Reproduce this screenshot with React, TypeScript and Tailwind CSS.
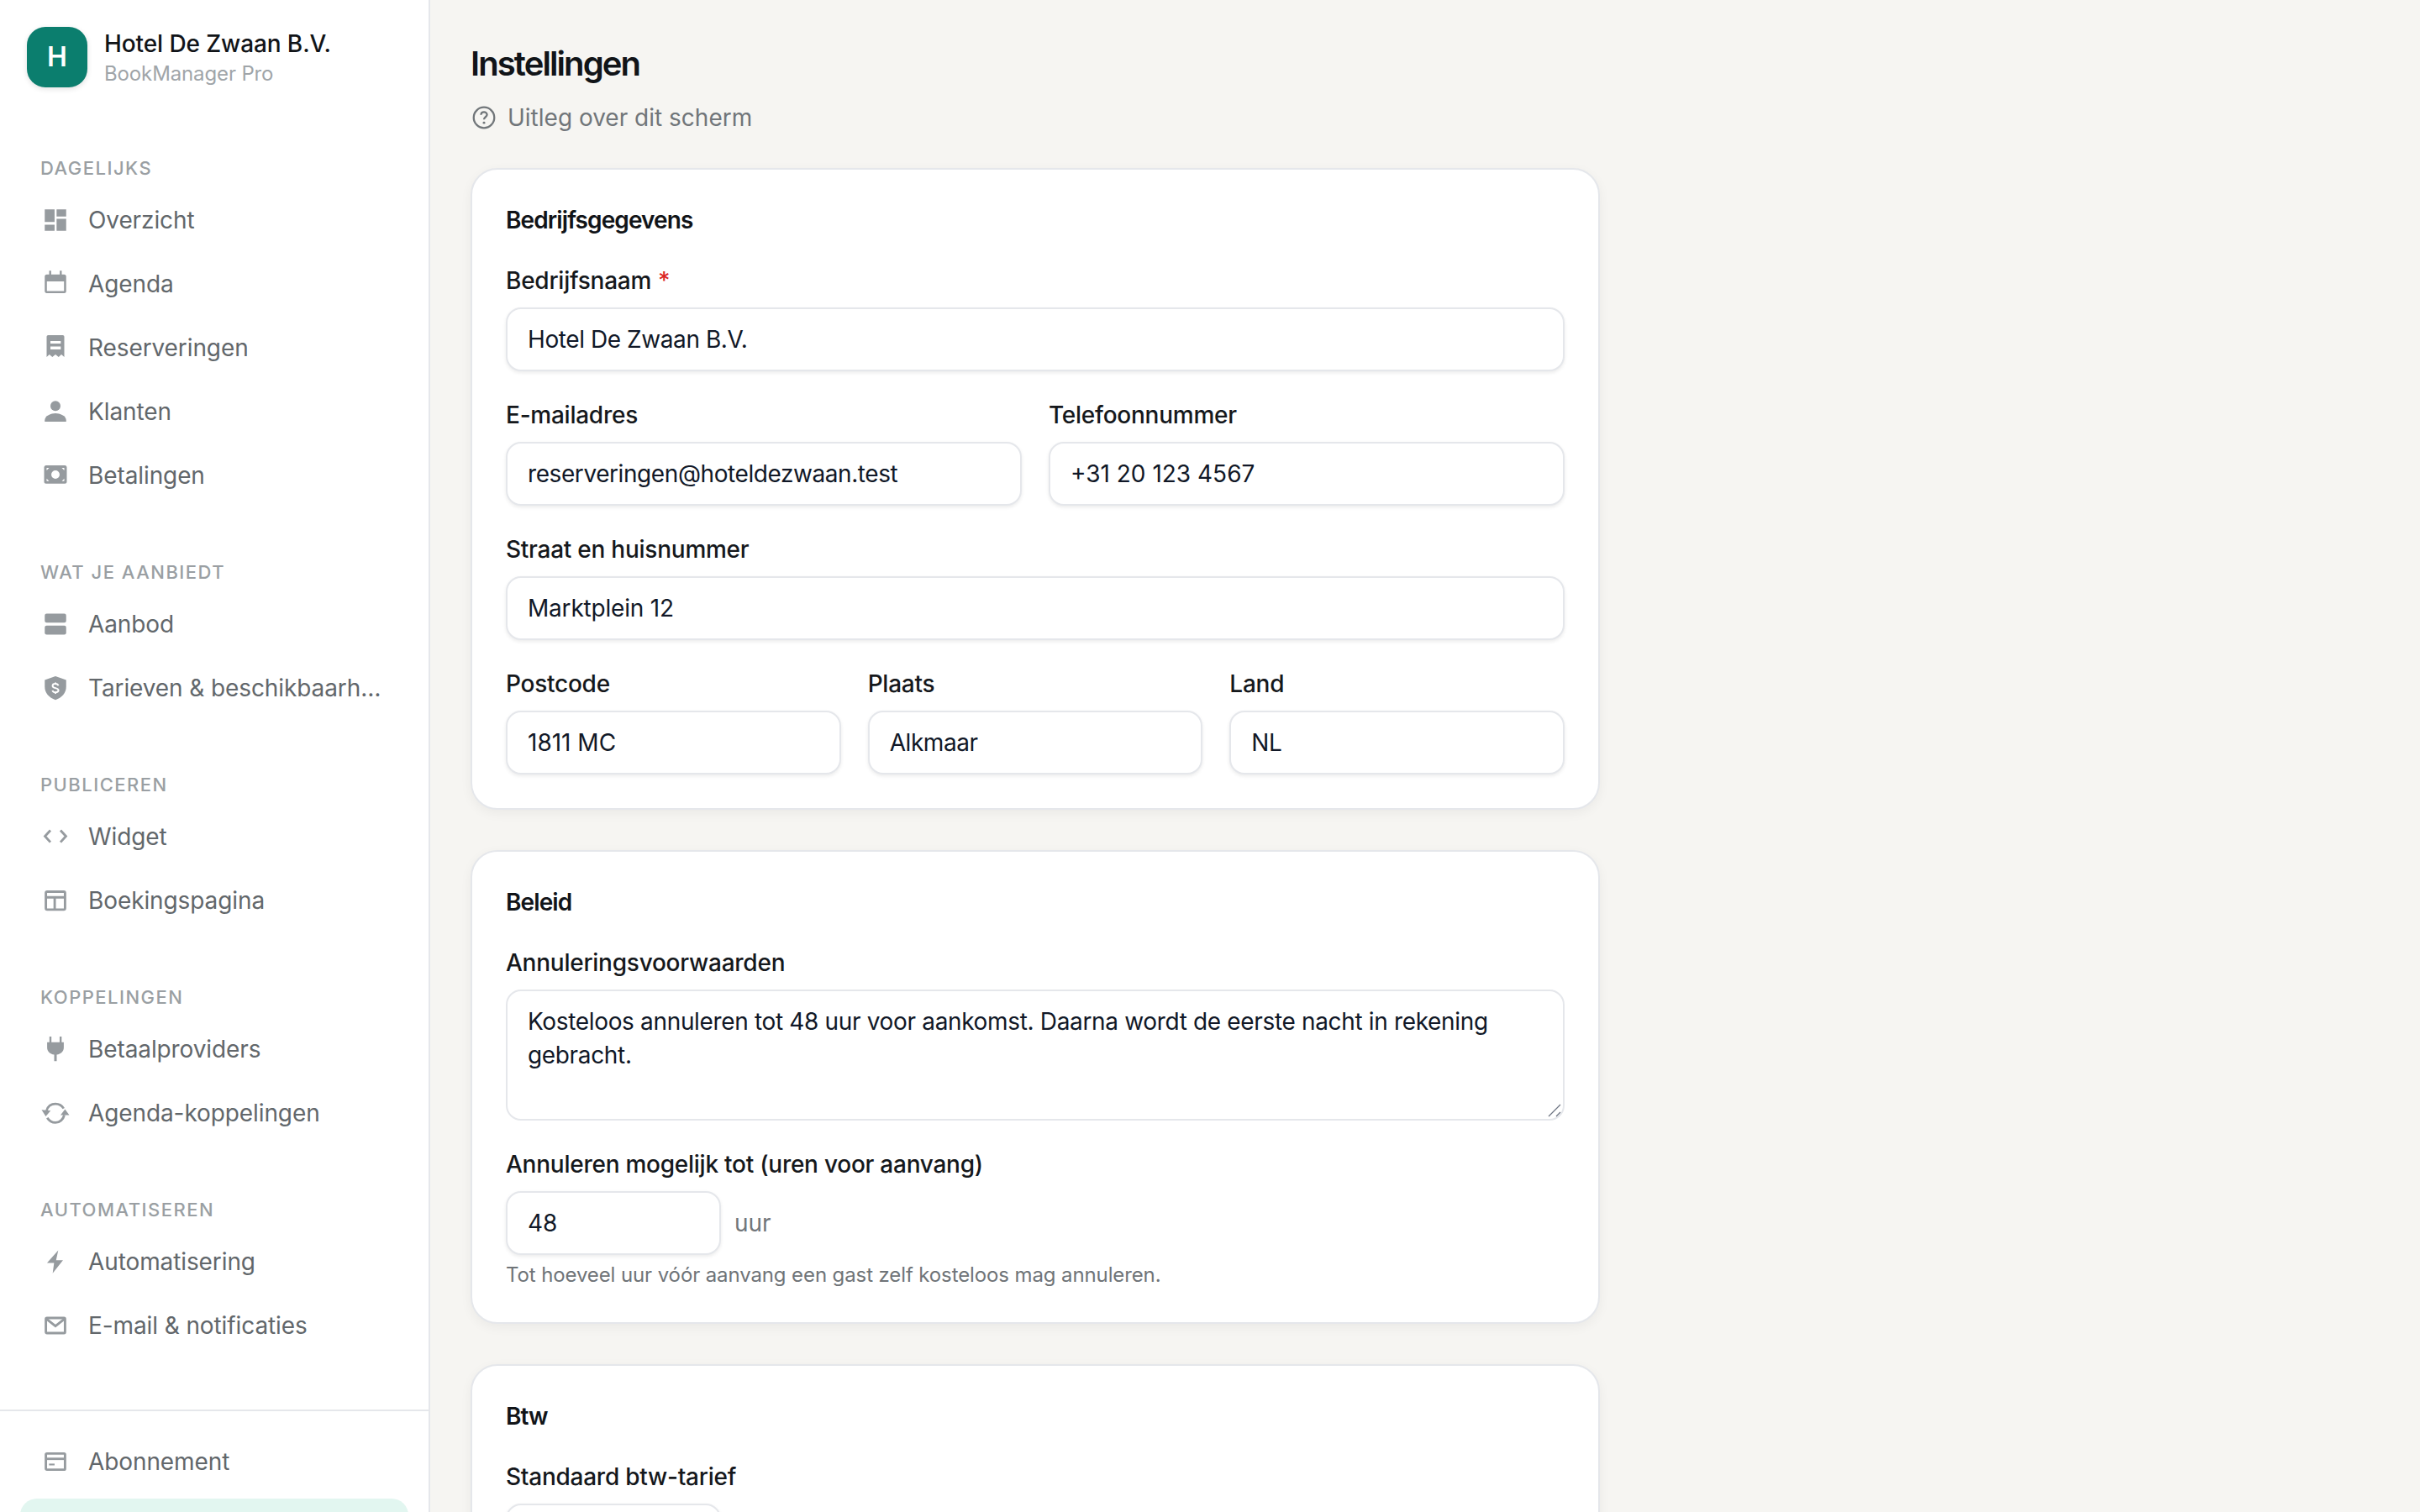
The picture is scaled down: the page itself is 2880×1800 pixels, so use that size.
import React from "react";

const Svg = ({ children }: { children: React.ReactNode }) => (
  <svg viewBox="0 0 24 24" className="w-9 h-9 shrink-0 text-[#969b9f]" fill="currentColor">
    {children}
  </svg>
);

const line = { fill: "none", stroke: "currentColor", strokeWidth: 1.9 } as const;

const icons: Record<string, React.ReactNode> = {
  dashboard: <path d="M3.5 3.5h7.8v10H3.5zM3.5 15.7h7.8v4.8H3.5zM12.9 3.5h7.6v5.6h-7.6zM12.9 11h7.6v9.5h-7.6z" />,
  calendar: (
    <path
      fillRule="evenodd"
      d="M7 1.5h1.6v3h6.8v-3H17v3h2c.9 0 1.5.7 1.5 1.5v11.800c0 .9-.7 1.500-1.500 1.500H5c-.9 0-1.500-.7-1.500-1.500V6c0-.8.6-1.500 1.500-1.500h2zM5.200 10v7.600h13.600V10z"
    />
  ),
  receipt: (
    <path
      fillRule="evenodd"
      d="M6.300 2h11.400c.8 0 1.300.6 1.300 1.300v16l-2.300-2-2.200 2-2.500-2-2.500 2-2.300-2-2.200 2v-16C5 2.600 5.500 2 6.300 2zM8 6.600v2.100h8.200V6.600zM8 11v2.300h8.200V11z"
    />
  ),
  person: (
    <>
      <circle cx="12" cy="7.500" r="4" />
      <path d="M3.500 20v-1c0-3.600 5-5.600 8.500-5.600s8.500 2 8.500 5.600v1z" />
    </>
  ),
  money: (
    <>
      <path
        fillRule="evenodd"
        d="M4.500 4h15c.9 0 1.500.7 1.500 1.500V17c0 .9-.7 1.500-1.500 1.500h-15C3.700 18.500 3 17.900 3 17V5.500C3 4.700 3.700 4 4.500 4zM12 8a3.300 3.300 0 1 0 0 6.600A3.300 3.300 0 0 0 12 8z"
      />
      <path fill="#fff" d="M5 6h2L5 8zM19 6h-2l2 2zM5 16.500h2l-2-2zM19 16.500h-2l2-2z" />
    </>
  ),
  offer: (
    <>
      <rect x="3.500" y="3.700" width="17" height="7.200" rx="1.500" />
      <rect x="3.500" y="13.100" width="17" height="7.300" rx="1.500" />
    </>
  ),
  shield: (
    <>
      <path d="M12 2.600l8.500 3v5.400c0 5-3.400 8.700-8.500 10.500-5.100-1.800-8.500-5.500-8.500-10.500V5.600z" />
      <path
        d="M14.300 10.200c-.3-1-1.200-1.500-2.300-1.500-1.300 0-2.300.6-2.300 1.600 0 2.400 4.700 1.200 4.700 3.600 0 1-1 1.600-2.400 1.600-1.200 0-2.100-.6-2.400-1.500M12 7.700v1M12 15.500v1.200"
        fill="none"
        stroke="#fff"
        strokeWidth="1.300"
      />
    </>
  ),
  code: <path {...line} d="M8 7l-4.300 4.700L8 16.400M16 7l4.300 4.700L16 16.400" />,
  layout: (
    <>
      <rect {...line} x="4.400" y="5" width="15.200" height="14.200" rx="1" />
      <path {...line} d="M4.400 9.500h15.200M11.400 9.500v9.700" />
    </>
  ),
  plug: (
    <path d="M7.200 2h1.600v4.500h6.500V2h1.600v4.500h1.700v4.200c0 3-2.200 5.300-5.600 5.700v5.100h-2v-5.100c-3.400-.4-5.600-2.700-5.600-5.700V6.500h1.800z" />
  ),
  sync: (
    <>
      <path {...line} d="M5 10.200C5.800 6.700 8.600 4.700 12 4.700c2.800 0 5.100 1.300 6.500 3.700" />
      <path {...line} d="M19 13.600c-.8 3.500-3.600 6-7 6-2.800 0-5.100-1.500-6.500-3.800" />
      <path d="M1 9.500l7.200.7-3.900 4.500zM23 13.700h-7l3.600-4.700z" />
    </>
  ),
  bolt: <path d="M14.200 3L5.300 13h5.600l-1.100 8.200 8.200-10.400h-5.500z" />,
  mail: (
    <>
      <rect {...line} x="4.400" y="6" width="15.200" height="12" rx=".8" />
      <path {...line} d="M4.600 6.600L12 12.400l7.400-5.800" />
    </>
  ),
  card: (
    <>
      <rect {...line} x="4.400" y="5.600" width="15.200" height="12.800" rx=".8" />
      <path {...line} d="M4.400 9.800h15.200" />
      <path {...line} strokeWidth="1.400" d="M6.900 14.300h4.400" />
    </>
  ),
  gear: (
    <>
      <circle {...line} cx="12" cy="12" r="3" />
      <circle {...line} cx="12" cy="12" r="8" />
    </>
  ),
};

const Item = ({ icon, label, active }: { icon: string; label: string; active?: boolean }) => (
  <div
    className={`flex items-center gap-5 h-[72px] shrink-0 px-6 rounded-[20px] text-[28px] ${
      active ? "bg-[#e2f6f0] text-[#0f7c6c] font-medium" : "text-[#62676b]"
    }`}
  >
    <Svg>{icons[icon]}</Svg>
    <span className="truncate leading-[44px] tracking-[-0.1px] pl-px">{label}</span>
  </div>
);

const Section = ({ title, items }: { title: string; items: [string, string][] }) => (
  <div className="mb-[63px]">
    <div className="h-8 leading-8 mb-[10px] px-6 text-[22px] font-medium uppercase tracking-[1.48px] text-[#9a9fa3]">
      {title}
    </div>
    <div className="flex flex-col gap-1">
      {items.map(([icon, label]) => (
        <Item key={label} icon={icon} label={label} />
      ))}
    </div>
  </div>
);

const Sidebar = () => (
  <aside className="w-[512px] h-full shrink-0 bg-white border-r-2 border-[#e5e7eb] flex flex-col overflow-hidden">
    <div className="flex items-center gap-5 pt-8 px-8 shrink-0">
      <div className="w-[72px] h-[72px] rounded-[22px] bg-[#0b7e6e] text-white flex items-center justify-center text-[32px] font-semibold shadow-[0_2px_6px_rgba(0,0,0,0.12)]">
        H
      </div>
      <div className="flex flex-col">
        <div className="text-[28px] leading-10 font-medium text-[#111418] tracking-[-0.1px]">Hotel De Zwaan B.V.</div>
        <div className="text-[24px] leading-8 text-[#a0a5a9] tracking-[-0.13px]">BookManager Pro</div>
      </div>
    </div>
    <nav className="flex-1 min-h-0 pt-[80px] px-6 overflow-hidden">
      <Section
        title="Dagelijks"
        items={[
          ["dashboard", "Overzicht"],
          ["calendar", "Agenda"],
          ["receipt", "Reserveringen"],
          ["person", "Klanten"],
          ["money", "Betalingen"],
        ]}
      />
      <Section
        title="Wat je aanbiedt"
        items={[
          ["offer", "Aanbod"],
          ["shield", "Tarieven & beschikbaarheid"],
        ]}
      />
      <Section
        title="Publiceren"
        items={[
          ["code", "Widget"],
          ["layout", "Boekingspagina"],
        ]}
      />
      <Section
        title="Koppelingen"
        items={[
          ["plug", "Betaalproviders"],
          ["sync", "Agenda-koppelingen"],
        ]}
      />
      <Section
        title="Automatiseren"
        items={[
          ["bolt", "Automatisering"],
          ["mail", "E-mail & notificaties"],
        ]}
      />
    </nav>
    <div className="h-[122px] shrink-0 overflow-hidden border-t-2 border-[#e5e7eb] pt-6 px-6 flex flex-col gap-2">
      <Item icon="card" label="Abonnement" />
      <Item icon="gear" label="Instellingen" active />
    </div>
  </aside>
);

const inputCls =
  "block w-full h-[76px] bg-white border-2 border-[#e5e7eb] rounded-[18px] px-6 text-[28px] text-[#111827] outline-none shadow-[0_2px_4px_rgba(0,0,0,0.08)]";

const Label = ({ children, required }: { children: React.ReactNode; required?: boolean }) => (
  <label className="block h-10 leading-10 mb-3 text-[28px] font-medium text-[#15181c] tracking-[-0.25px]">
    {children}
    {required && <span className="ml-2 text-[#dc2626]">*</span>}
  </label>
);

const Field = ({
  label,
  value,
  required,
  track = "tracking-[-0.42px]",
}: {
  label: string;
  value: string;
  required?: boolean;
  track?: string;
}) => (
  <div className="min-w-0">
    <Label required={required}>{label}</Label>
    <input className={`${inputCls} ${track}`} defaultValue={value} />
  </div>
);

const Card = ({ title, children }: { title: string; children: React.ReactNode }) => (
  <section className="w-[1344px] bg-white border-2 border-[#e5e7eb] rounded-[32px] p-10 shadow-[0_4px_14px_rgba(0,0,0,0.05)]">
    <h2 className="h-10 leading-10 mb-8 text-[28px] font-semibold text-[#111418] tracking-[-0.9px]">{title}</h2>
    <div className="flex flex-col gap-8">{children}</div>
  </section>
);

export default function App() {
  return (
    <div className="flex w-[2880px] h-[1800px] overflow-hidden bg-[#f6f5f2] font-['Inter',sans-serif]">
      <Sidebar />
      <main className="flex-1 min-w-0 pt-12 pl-12 overflow-hidden">
        <h1 className="h-14 leading-14 text-[40px] font-semibold text-[#111418] tracking-[-1.9px]">Instellingen</h1>
        <div className="flex items-center gap-3 h-10 mt-4 mb-10 text-[28px] text-[#71767a]">
          <svg viewBox="0 0 24 24" className="w-8 h-8 shrink-0" fill="none" stroke="currentColor">
            <circle cx="12" cy="12" r="9.200" strokeWidth="1.700" />
            <path d="M9.300 9.600c.1-1.600 1.300-2.500 2.700-2.500 1.500 0 2.700 1 2.700 2.300 0 2-2.700 2.100-2.700 4.300" strokeWidth="1.700" />
            <circle cx="12" cy="16.600" r="1.100" fill="currentColor" stroke="none" />
          </svg>
          Uitleg over dit scherm
        </div>
        <div className="flex flex-col gap-12">
          <Card title="Bedrijfsgegevens">
            <Field label="Bedrijfsnaam" value="Hotel De Zwaan B.V." required />
            <div className="grid grid-cols-2 gap-8">
              <Field label="E-mailadres" value="reserveringen@hoteldezwaan.test" />
              <Field label="Telefoonnummer" value="+31 20 123 4567" track="tracking-normal" />
            </div>
            <Field label="Straat en huisnummer" value="Marktplein 12" track="tracking-[-0.2px]" />
            <div className="grid grid-cols-3 gap-8">
              <Field label="Postcode" value="1811 MC" track="tracking-normal" />
              <Field label="Plaats" value="Alkmaar" />
              <Field label="Land" value="NL" />
            </div>
          </Card>
          <Card title="Beleid">
            <div>
              <Label>Annuleringsvoorwaarden</Label>
              <div className="relative">
                <textarea
                  readOnly
                  rows={3}
                  className="block w-full h-[156px] resize-none bg-white border-2 border-[#e5e7eb] rounded-[18px] px-6 py-4 text-[28px] leading-10 text-[#111827] tracking-[-0.34px] outline-none"
                  defaultValue="Kosteloos annuleren tot 48 uur voor aankomst. Daarna wordt de eerste nacht in rekening gebracht."
                />
                <svg viewBox="0 0 16 16" className="absolute right-1 bottom-1 w-4 h-4" fill="none" stroke="#6b7280" strokeWidth="1.200">
                  <path d="M1 15L15 1M10 15l5-5" />
                </svg>
              </div>
            </div>
            <div>
              <Label>Annuleren mogelijk tot (uren voor aanvang)</Label>
              <div className="flex items-center gap-4">
                <input className={`${inputCls} !w-64`} defaultValue="48" />
                <span className="text-[28px] text-[#71767a]">uur</span>
              </div>
              <p className="mt-2 leading-8 text-[24px] text-[#6f7478] tracking-[-0.11px]">
                Tot hoeveel uur vóór aanvang een gast zelf kosteloos mag annuleren.
              </p>
            </div>
          </Card>
          <Card title="Btw">
            <div>
              <Label>Standaard btw-tarief</Label>
              <input className={`${inputCls} !w-64`} defaultValue="21" />
            </div>
          </Card>
        </div>
      </main>
    </div>
  );
}
